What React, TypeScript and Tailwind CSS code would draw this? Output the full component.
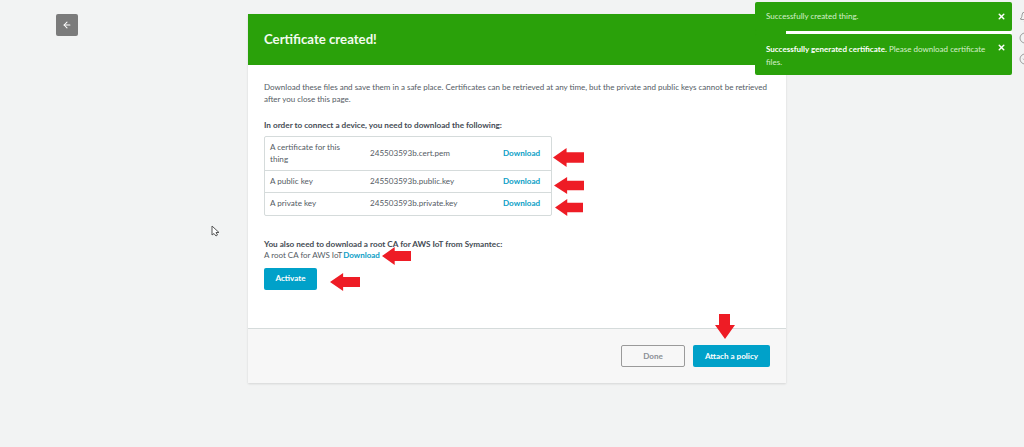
import { ArrowLeft, X, Bell, Info, CircleCheck } from "lucide-react";

function RedArrow({ className }: { className: string }) {
  return (
    <svg className={`absolute ${className}`} viewBox="0 0 32 20" preserveAspectRatio="none" fill="#ee1c25">
      <path d="M0 10 L14 0 L14 4.5 L32 4.5 L32 15.5 L14 15.5 L14 20 Z" />
    </svg>
  );
}

function Row({ label, file, tall }: { label: string; file: string; tall?: boolean }) {
  return (
    <div className={`flex items-center border-b border-[#d5dbdb] last:border-b-0 pl-[5px] pt-[1px] ${tall ? "h-[34px]" : "h-[22px]"}`}>
      <div className="mr-[20px] w-[80px] leading-[11.5px] text-[#545b64]">{label}</div>
      <div className="w-[133px] text-[#545b64]">{file}</div>
      <div className="font-bold text-[#0a9ec6]">Download</div>
    </div>
  );
}

function Toast({ children, className }: { children: React.ReactNode; className: string }) {
  return (
    <div className={`flex w-[257px] rounded-[2px] bg-[#2aa10a] pl-[11px] pr-[6px] text-white ${className}`}>
      <div className="flex-1 pr-[10px] text-[8px] leading-[12.5px] text-[#d6efcc]">{children}</div>
      <X size={9} strokeWidth={4} className="shrink-0" />
    </div>
  );
}

export default function App() {
  return (
    <div className="relative h-[447px] w-[1024px] overflow-hidden bg-[#f2f3f3] text-[8.1px] font-['Lato',sans-serif]">
      <div className="flex items-start pl-[56px] pt-[14px]">
        <button className="flex h-[22px] w-[22px] items-center justify-center rounded-[2px] bg-[#7b7b7b] text-white">
          <ArrowLeft size={10} strokeWidth={2.5} />
        </button>
        <div className="ml-[170px] flex h-[369px] w-[538px] flex-col bg-white shadow-[0_1px_2px_rgba(0,0,0,0.12)]">
          <div className="flex h-[51px] items-center bg-[#2aa10a] px-[16px] text-[13.2px] font-bold text-[#f2fbef]">Certificate created!</div>
          <div className="flex-1 px-[16px] pt-[17px] leading-[11.5px] text-[#545b64]">
            <p className="w-[506px] text-[8px]">Download these files and save them in a safe place. Certificates can be retrieved at any time, but the private and public keys cannot be retrieved after you close this page.</p>
            <p className="mt-[15px] text-[8.2px] font-bold text-[#444b54]">In order to connect a device, you need to download the following:</p>
            <div className="mt-[4px] w-[288px] rounded-[2px] border border-[#d5dbdb]">
              <Row label="A certificate for this thing" file="245503593b.cert.pem" tall />
              <Row label="A public key" file="245503593b.public.key" />
              <Row label="A private key" file="245503593b.private.key" />
            </div>
            <p className="mt-[23px] text-[8.2px] font-bold text-[#444b54]">You also need to download a root CA for AWS IoT from Symantec:</p>
            <p className="text-[8px]">A root CA for AWS IoT<span className="ml-[1px] font-bold text-[#0a9ec6]">Download</span></p>
            <button className="mt-[6px] block h-[22px] w-[53px] rounded-[2px] bg-[#00a1c9] font-bold text-white">Activate</button>
          </div>
          <div className="flex h-[55px] items-center justify-end gap-[8px] border-t border-[#d5dbdb] bg-[#f7f7f7] pr-[16px]">
            <button className="h-[22px] w-[64px] rounded-[2px] border border-[#9a9a9a] bg-[#f7f7f7] font-bold text-[#8a8f95]">Done</button>
            <button className="h-[22px] w-[77px] rounded-[2px] bg-[#00a1c9] font-bold text-white">Attach a policy</button>
          </div>
        </div>
      </div>

      <div className="absolute left-[755px] top-[2px] flex flex-col">
        <Toast className="h-[29px] items-center">Successfully created thing.</Toast>
        <div className="ml-[31px] h-[3px] w-[226px] bg-white" />
        <Toast className="h-[41px] items-start pt-[9px]"><b className="text-white">Successfully generated certificate.</b> Please download certificate files.</Toast>
      </div>

      <div className="absolute left-[1019px] top-[11px] flex flex-col gap-[9px] text-[#666]">
        <Bell size={12} strokeWidth={1.2} />
        <Info size={12} strokeWidth={1.2} />
        <CircleCheck size={12} strokeWidth={1.2} />
      </div>

      <RedArrow className="left-[553px] top-[148px] h-[19px] w-[31px]" />
      <RedArrow className="left-[554px] top-[177px] h-[17px] w-[30px]" />
      <RedArrow className="left-[555px] top-[199px] h-[17px] w-[28px]" />
      <RedArrow className="left-[382px] top-[247px] h-[18px] w-[29px]" />
      <RedArrow className="left-[330px] top-[273px] h-[18px] w-[30px]" />

      <svg className="absolute left-[714px] top-[314px] h-[26px] w-[22px]" viewBox="0 0 22 26" fill="#ee1c25">
        <path d="M5 0 H16 V11 H21 L11 25 L1 11 H5 Z" />
      </svg>

      <svg className="absolute left-[211px] top-[225px] h-[12px] w-[9px]" viewBox="0 0 9 12" fill="#fff" stroke="#555" strokeWidth="1">
        <path d="M1 1 V10 L3 8.5 L5 11 L6.5 10 L5 7.5 L8 7.5 Z" />
      </svg>
    </div>
  );
}
